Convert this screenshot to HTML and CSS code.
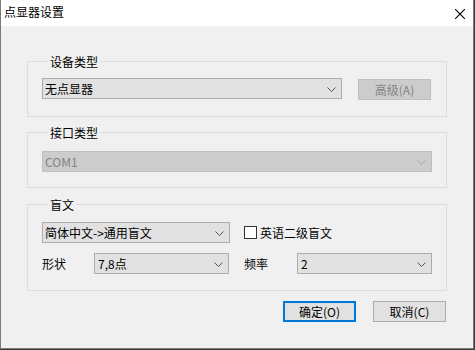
FILE: index.html
```html
<!DOCTYPE html>
<html lang="zh-CN">
<head>
<meta charset="utf-8">
<title>点显器设置</title>
<link rel="stylesheet" href="styles.css">
</head>
<body>
<div class="window">
  <div class="titlebar">
    <span class="title">点显器设置</span>
    <svg class="close" width="10" height="10" viewBox="0 0 10 10"><path d="M0 0L10 10M10 0L0 10" stroke="#000" stroke-width="1.1" fill="none"/></svg>
  </div>
  <div class="content">
    <div class="group g1">
      <span class="group-title">设备类型</span>
      <div class="row">
        <div class="combo w300"><span>无点显器</span><svg class="chev" width="9" height="5" viewBox="0 0 9 5"><path d="M0.5 0.5L4.5 4.5L8.5 0.5" stroke="#505050" fill="none"/></svg></div>
        <button class="btn disabled adv">高级(A)</button>
      </div>
    </div>
    <div class="group g2">
      <span class="group-title">接口类型</span>
      <div class="row">
        <div class="combo disabled w390"><span>COM1</span><svg class="chev" width="9" height="5" viewBox="0 0 9 5"><path d="M0.5 0.5L4.5 4.5L8.5 0.5" stroke="#a6a6a6" fill="none"/></svg></div>
      </div>
    </div>
    <div class="group g3">
      <span class="group-title">盲文</span>
      <div class="row">
        <div class="combo w188"><span>简体中文-&gt;通用盲文</span><svg class="chev" width="9" height="5" viewBox="0 0 9 5"><path d="M0.5 0.5L4.5 4.5L8.5 0.5" stroke="#505050" fill="none"/></svg></div>
        <label class="check"><span class="box"></span><span>英语二级盲文</span></label>
      </div>
      <div class="row row2">
        <span class="lbl l52">形状</span>
        <div class="combo w135 pad3"><span>7,8点</span><svg class="chev" width="9" height="5" viewBox="0 0 9 5"><path d="M0.5 0.5L4.5 4.5L8.5 0.5" stroke="#505050" fill="none"/></svg></div>
        <span class="lbl l53 ml15">频率</span>
        <div class="combo w135 pad3"><span>2</span><svg class="chev" width="9" height="5" viewBox="0 0 9 5"><path d="M0.5 0.5L4.5 4.5L8.5 0.5" stroke="#505050" fill="none"/></svg></div>
      </div>
    </div>
    <div class="buttons">
      <button class="btn default">确定(O)</button>
      <button class="btn">取消(C)</button>
    </div>
  </div>
</div>
</body>
</html>
```
FILE: styles.css
```css
html, body {
  margin: 0;
  padding: 0;
  background: #3b3b3b;
}
body {
  font-family: "Noto Sans CJK SC", "Noto Sans", sans-serif;
  font-size: 12px;
  color: #000;
}
.window {
  width: 474px;
  height: 349px;
  box-sizing: border-box;
  border: 1px solid #7a7a7a;
  border-top: none;
  background: #f0f0f0;
  display: flex;
  flex-direction: column;
}
.titlebar {
  height: 26px;
  flex: none;
  background: #fff;
  display: flex;
  align-items: center;
  justify-content: space-between;
  padding: 0 8px 0 3px;
}
.title {
  font-size: 12px;
  line-height: 16px;
  margin-top: -2px;
}
.close {
  display: block;
  margin-top: 1px;
}
.content {
  padding: 0 26px;
  display: flex;
  flex-direction: column;
}
.group {
  border: 1px solid #dcdcdc;
  padding: 0 14px 16px;
  display: flex;
  flex-direction: column;
}
.group-title {
  display: block;
  align-self: flex-start;
  margin: -8px 0 0 6px;
  padding: 0 2px;
  background: #f0f0f0;
  line-height: 16px;
  height: 16px;
}
.g1 { margin-top: 35px; }
.g1 .row { margin-top: 8px; }
.g2 { margin-top: 15px; padding-bottom: 15px; }
.g2 .row { margin-top: 10px; }
.g3 { margin-top: 16px; }
.g3 .row { margin-top: 9px; }
.g3 .row2 { margin-top: 10px; }
.row {
  display: flex;
  align-items: center;
}
.g1 .row { align-items: flex-start; }
.combo {
  height: 21px;
  box-sizing: border-box;
  border: 1px solid #adadad;
  background: #e1e1e1;
  display: flex;
  align-items: center;
  justify-content: space-between;
  padding: 0 5px 0 2px;
  line-height: 16px;
}
.combo.pad3 { padding-left: 3px; }
.combo.disabled {
  background: #cccccc;
  border-color: #bfbfbf;
  color: #838383;
}
.chev { display: block; margin-top: 1px; }
.w300 { width: 300px; }
.w390 { width: 390px; }
.w188 { width: 188px; }
.w135 { width: 135px; }
.btn {
  font: inherit;
  width: 73px;
  height: 21px;
  box-sizing: border-box;
  border: 1px solid #adadad;
  background: #e1e1e1;
  color: #000;
  padding: 0;
  line-height: 16px;
  margin: 0;
}
.btn.disabled {
  background: #cccccc;
  border-color: #bfbfbf;
  color: #838383;
}
.adv { margin: 1px 0 0 16px; }
.btn.default {
  border: 2px solid #0078d7;
}
.check {
  display: flex;
  align-items: center;
  margin-left: 14px;
}
.box {
  width: 13px;
  height: 13px;
  box-sizing: border-box;
  border: 1px solid #333;
  background: #fff;
  margin-right: 3px;
}
.lbl { line-height: 16px; }
.l52 { width: 52px; }
.l53 { width: 53px; }
.ml15 { margin-left: 15px; }
.buttons {
  display: flex;
  justify-content: flex-end;
  gap: 17px;
  margin-top: 10px;
  padding-right: 1px;
}
```
